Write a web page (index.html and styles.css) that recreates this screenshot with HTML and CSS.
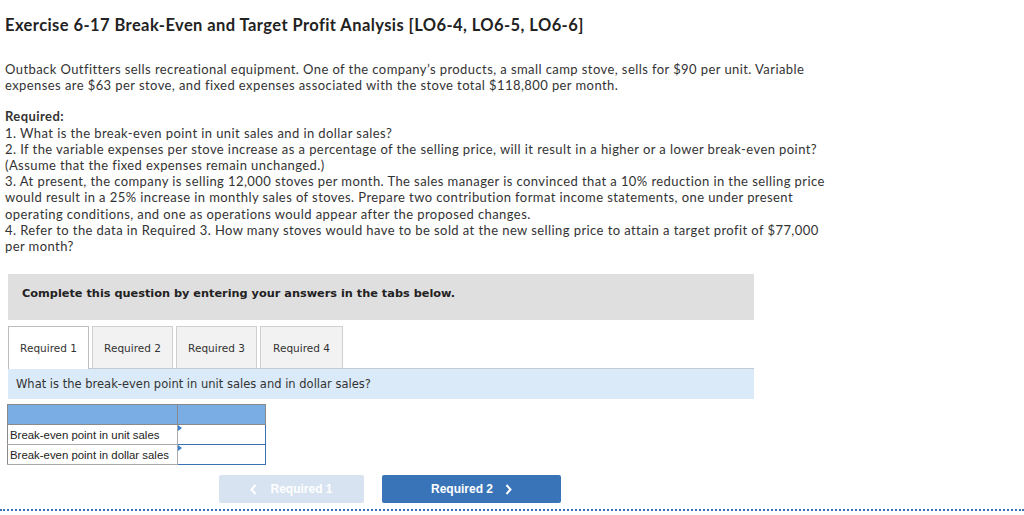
FILE: index.html
```html
<!DOCTYPE html>
<html>
<head>
<meta charset="utf-8">
<link rel="stylesheet" href="styles.css">
</head>
<body>
<div class="page">
  <h1 class="title">Exercise 6-17 Break-Even and Target Profit Analysis [LO6-4, LO6-5, LO6-6]</h1>
  <p class="intro">Outback Outfitters sells recreational equipment. One of the company’s products, a small camp stove, sells for $90 per unit. Variable<br>expenses are $63 per stove, and fixed expenses associated with the stove total $118,800 per month.</p>
  <div class="req">
    <div class="req-head">Required:</div>
    <div>1. What is the break-even point in unit sales and in dollar sales?</div>
    <div>2. If the variable expenses per stove increase as a percentage of the selling price, will it result in a higher or a lower break-even point?<br>(Assume that the fixed expenses remain unchanged.)</div>
    <div>3. At present, the company is selling 12,000 stoves per month. The sales manager is convinced that a 10% reduction in the selling price<br>would result in a 25% increase in monthly sales of stoves. Prepare two contribution format income statements, one under present<br>operating conditions, and one as operations would appear after the proposed changes.</div>
    <div>4. Refer to the data in Required 3. How many stoves would have to be sold at the new selling price to attain a target profit of $77,000<br>per month?</div>
  </div>

  <div class="question">
    <div class="banner">Complete this question by entering your answers in the tabs below.</div>
    <div class="tabs">
      <div class="tab active">Required 1</div>
      <div class="tab">Required 2</div>
      <div class="tab">Required 3</div>
      <div class="tab">Required 4</div>
    </div>
    <div class="prompt">What is the break-even point in unit sales and in dollar sales?</div>
    <table class="grid">
      <tr class="head"><th class="c1"></th><th class="c2"></th></tr>
      <tr><td class="c1">Break-even point in unit sales</td><td class="c2 input"><span class="flag"></span></td></tr>
      <tr><td class="c1">Break-even point in dollar sales</td><td class="c2 input"><span class="flag"></span></td></tr>
    </table>
    <div class="nav">
      <div class="btn prev"><svg class="chev" width="7" height="11" viewBox="0 0 7 11"><path d="M5.5 1 L1.5 5.5 L5.5 10" fill="none" stroke="#fff" stroke-width="2"/></svg>Required 1</div>
      <div class="btn next">Required 2<svg class="chev" width="7" height="11" viewBox="0 0 7 11"><path d="M1.5 1 L5.5 5.5 L1.5 10" fill="none" stroke="#fff" stroke-width="2"/></svg></div>
    </div>
  </div>
  <div class="dots"></div>
</div>
</body>
</html>
```
FILE: styles.css
```css
html, body {
  margin: 0;
  padding: 0;
  background: #fff;
}
.page {
  padding: 0 0 0 5px;
  font-family: Lato, "Open Sans", "Liberation Sans", sans-serif;
  color: #333;
}
.title {
  margin: 0;
  padding-top: 15px;
  font-size: 16.5px;
  font-weight: bold;
  line-height: 20px;
  color: #222;
  letter-spacing: 0.42px;
}
.intro {
  margin: 26px 0 0 0;
  font-size: 13px;
  line-height: 16.2px;
  letter-spacing: 0.42px;
}
.req {
  margin-top: 15px;
  font-size: 13px;
  line-height: 16.2px;
  letter-spacing: 0.42px;
}
.req-head {
  font-weight: bold;
}
.question {
  margin-top: 20px;
  margin-left: 3px;
  width: 746px;
  font-family: "DejaVu Sans", Verdana, sans-serif;
}
.banner {
  background: #dfdfdf;
  height: 46px;
  box-sizing: border-box;
  padding: 12px 0 0 14px;
  font-size: 11.3px;
  font-weight: bold;
  line-height: 16px;
  color: #222;
}
.tabs {
  display: flex;
  gap: 3px;
  margin-top: 6px;
}
.tab {
  width: 81px;
  height: 42px;
  box-sizing: border-box;
  border: 1px solid #cfcfcf;
  border-bottom: none;
  background: #f2f2f2;
  font-size: 10.5px;
  color: #333;
  display: flex;
  align-items: center;
  justify-content: center;
}
.tab.active {
  background: #fff;
  border-color: #bdbdbd;
  position: relative;
  z-index: 1;
  height: 43px;
  margin-bottom: -1px;
}
.tab:last-child {
  width: 83px;
}
.prompt {
  background: #daeaf8;
  border-top: 1px solid #c3ccd6;
  height: 31px;
  box-sizing: border-box;
  padding: 7px 0 0 8px;
  font-size: 11.5px;
  line-height: 16px;
  color: #333;
}
.grid {
  border-collapse: collapse;
  margin-top: 5px;
  margin-left: -1px;
  font-family: "Liberation Sans", Arial, sans-serif;
  font-size: 11.4px;
  color: #222;
}
.grid th, .grid td {
  border: 1px solid #8a8a8a;
  padding: 0;
}
.grid .head th {
  background: #7aade3;
  height: 19px;
  border-color: #8a8a8a;
}
.grid td {
  height: 19px;
}
.grid td.c1 {
  width: 167px;
  padding-left: 2px;
  border-color: #aaa;
  border-left-color: #8a8a8a;
}
.grid .c2 {
  width: 87px;
}
.grid td.input {
  border: 1.5px solid #3a72b5;
  position: relative;
  background: #fff;
}
.flag {
  position: absolute;
  left: 0;
  top: 0;
  width: 0;
  height: 0;
  border-top: 3px solid transparent;
  border-bottom: 3px solid transparent;
  border-left: 4px solid #3a80d0;
}
.nav {
  display: flex;
  gap: 18px;
  margin-top: 10px;
  margin-left: 211px;
}
.btn {
  height: 28px;
  border-radius: 2px;
  font-family: "Liberation Sans", Arial, sans-serif;
  font-size: 12px;
  font-weight: bold;
  color: #fff;
  display: flex;
  align-items: center;
  justify-content: center;
}
.btn.prev {
  width: 145px;
  background: #d7e3f0;
}
.btn.next {
  width: 179px;
  background: #3a74b8;
}
.prev .chev {
  margin-right: 13px;
}
.next .chev {
  margin-left: 12px;
}
.dots {
  margin-top: 6px;
  margin-left: -5px;
  border-top: 2px dotted #3a74b8;
  height: 0;
}
```
